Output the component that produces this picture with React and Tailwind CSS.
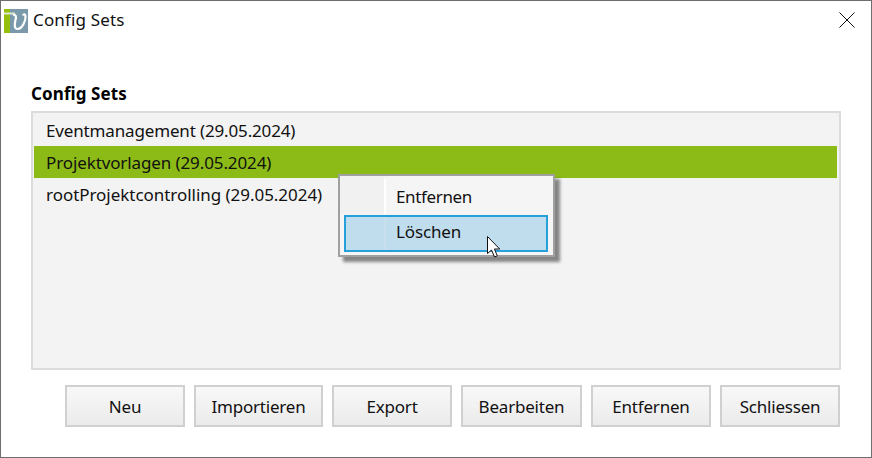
const font = { fontFamily: '"Noto Sans", sans-serif' };

function Btn({ label, w }) {
  return (
    <button className={`${w} h-[42px] border-2 border-[#d0d0d0] bg-gradient-to-b from-[#f8f8f8] to-[#ebebeb] text-[17px] tracking-[-0.2px] text-[#111] flex items-center justify-center pt-[1px]`}>
      {label}
    </button>
  );
}

function Row({ label, selected, track }) {
  return (
    <div className={`h-8 pl-3 pt-[1px] flex items-center text-[17px] ${track} text-[#111] ${selected ? 'bg-[#8cbb17]' : ''}`}>
      {label}
    </div>
  );
}

export default function App() {
  return (
    <div style={font} className="relative w-[872px] h-[458px] bg-white border border-[#6e6e6e] overflow-hidden flex flex-col">
      <div className="h-[39px] flex items-center shrink-0">
        <svg width="24" height="24" viewBox="0 0 24 24" className="ml-[3px] mr-[5px]">
          <rect width="24" height="24" fill="#7a99ab" />
          <rect width="6" height="24" fill="#96bf0d" />
          <rect x="0" y="3.5" width="11" height="2" fill="#dfe8d0" />
          <path d="M9 6 C12 5 12.5 8 11.5 11 C10.5 15 10 20 13.5 20 C18 20 22 12 21.5 7 C21.3 5 19.5 5 19 6.5" fill="none" stroke="#fff" strokeWidth="2.2" />
        </svg>
        <span className="text-[17px] tracking-[0.15px] text-[#111] mt-[-2px]">Config Sets</span>
        <svg width="16" height="16" viewBox="0 0 16 16" className="ml-auto mr-[16px] mt-[-1px]">
          <path d="M0.5 0.5 L15.5 15.5 M15.5 0.5 L0.5 15.5" stroke="#111" strokeWidth="1" fill="none" />
        </svg>
      </div>
      <div className="ml-[30px] mr-[30px] flex flex-col">
        <div className="mt-[42px] h-[29px] font-bold text-[17px] tracking-[0.1px] text-black leading-[24px]">Config Sets</div>
        <div className="h-[259px] border-2 border-[#dcdcdc] bg-[#f3f3f3] pl-px pr-[2px] pt-px">
          <Row label="Eventmanagement (29.05.2024)" track="tracking-[-0.15px]" />
          <Row label="Projektvorlagen (29.05.2024)" selected track="tracking-[-0.11px]" />
          <Row label="rootProjektcontrolling (29.05.2024)" track="tracking-[-0.04px]" />
        </div>
        <div className="mt-[15px] ml-[34px] flex gap-[9px]">
          <Btn label="Neu" w="w-[120px]" />
          <Btn label="Importieren" w="w-[129px]" />
          <Btn label="Export" w="w-[120px]" />
          <Btn label="Bearbeiten" w="w-[121px]" />
          <Btn label="Entfernen" w="w-[120px]" />
          <Btn label="Schliessen" w="w-[120px]" />
        </div>
      </div>

      <div className="absolute left-[337px] top-[173px] w-[217px] h-[83px] border-2 border-[#a0a0a0] bg-[#f5f5f5] shadow-[5px_5px_3px_rgba(0,0,0,0.45)] p-1 text-[17px] tracking-[-0.15px] text-[#111]">
        <div className="relative h-[34px] flex items-center pl-[52px] tracking-[-0.35px]">
          <span className="absolute left-[-4px] top-[-4px] bottom-0 w-[44px] bg-[#f1f1f1]"></span>
          <span className="absolute left-[40px] top-[-1px] bottom-0 w-[2px] bg-white"></span>
          <span className="relative">Entfernen</span>
        </div>
        <div className="relative h-[37px] mt-[1px] w-[204px] border-2 border-[#26a0da] bg-[#c0dded] flex items-center pl-[50px] pb-[3px]">
          <span className="absolute left-[38px] top-0 bottom-0 w-[2px] bg-[#c8e0ee]"></span>
          Löschen
        </div>
      </div>

      <svg width="16" height="23" viewBox="0 0 16 23" className="absolute left-[486px] top-[235px]">
        <path d="M0.5 0.5 L0.5 17.5 L4.5 14 L7.5 21 L10.3 19.8 L7.4 13 L12.7 13 Z" fill="#fff" stroke="#111" strokeWidth="1" />
      </svg>
    </div>
  );
}
